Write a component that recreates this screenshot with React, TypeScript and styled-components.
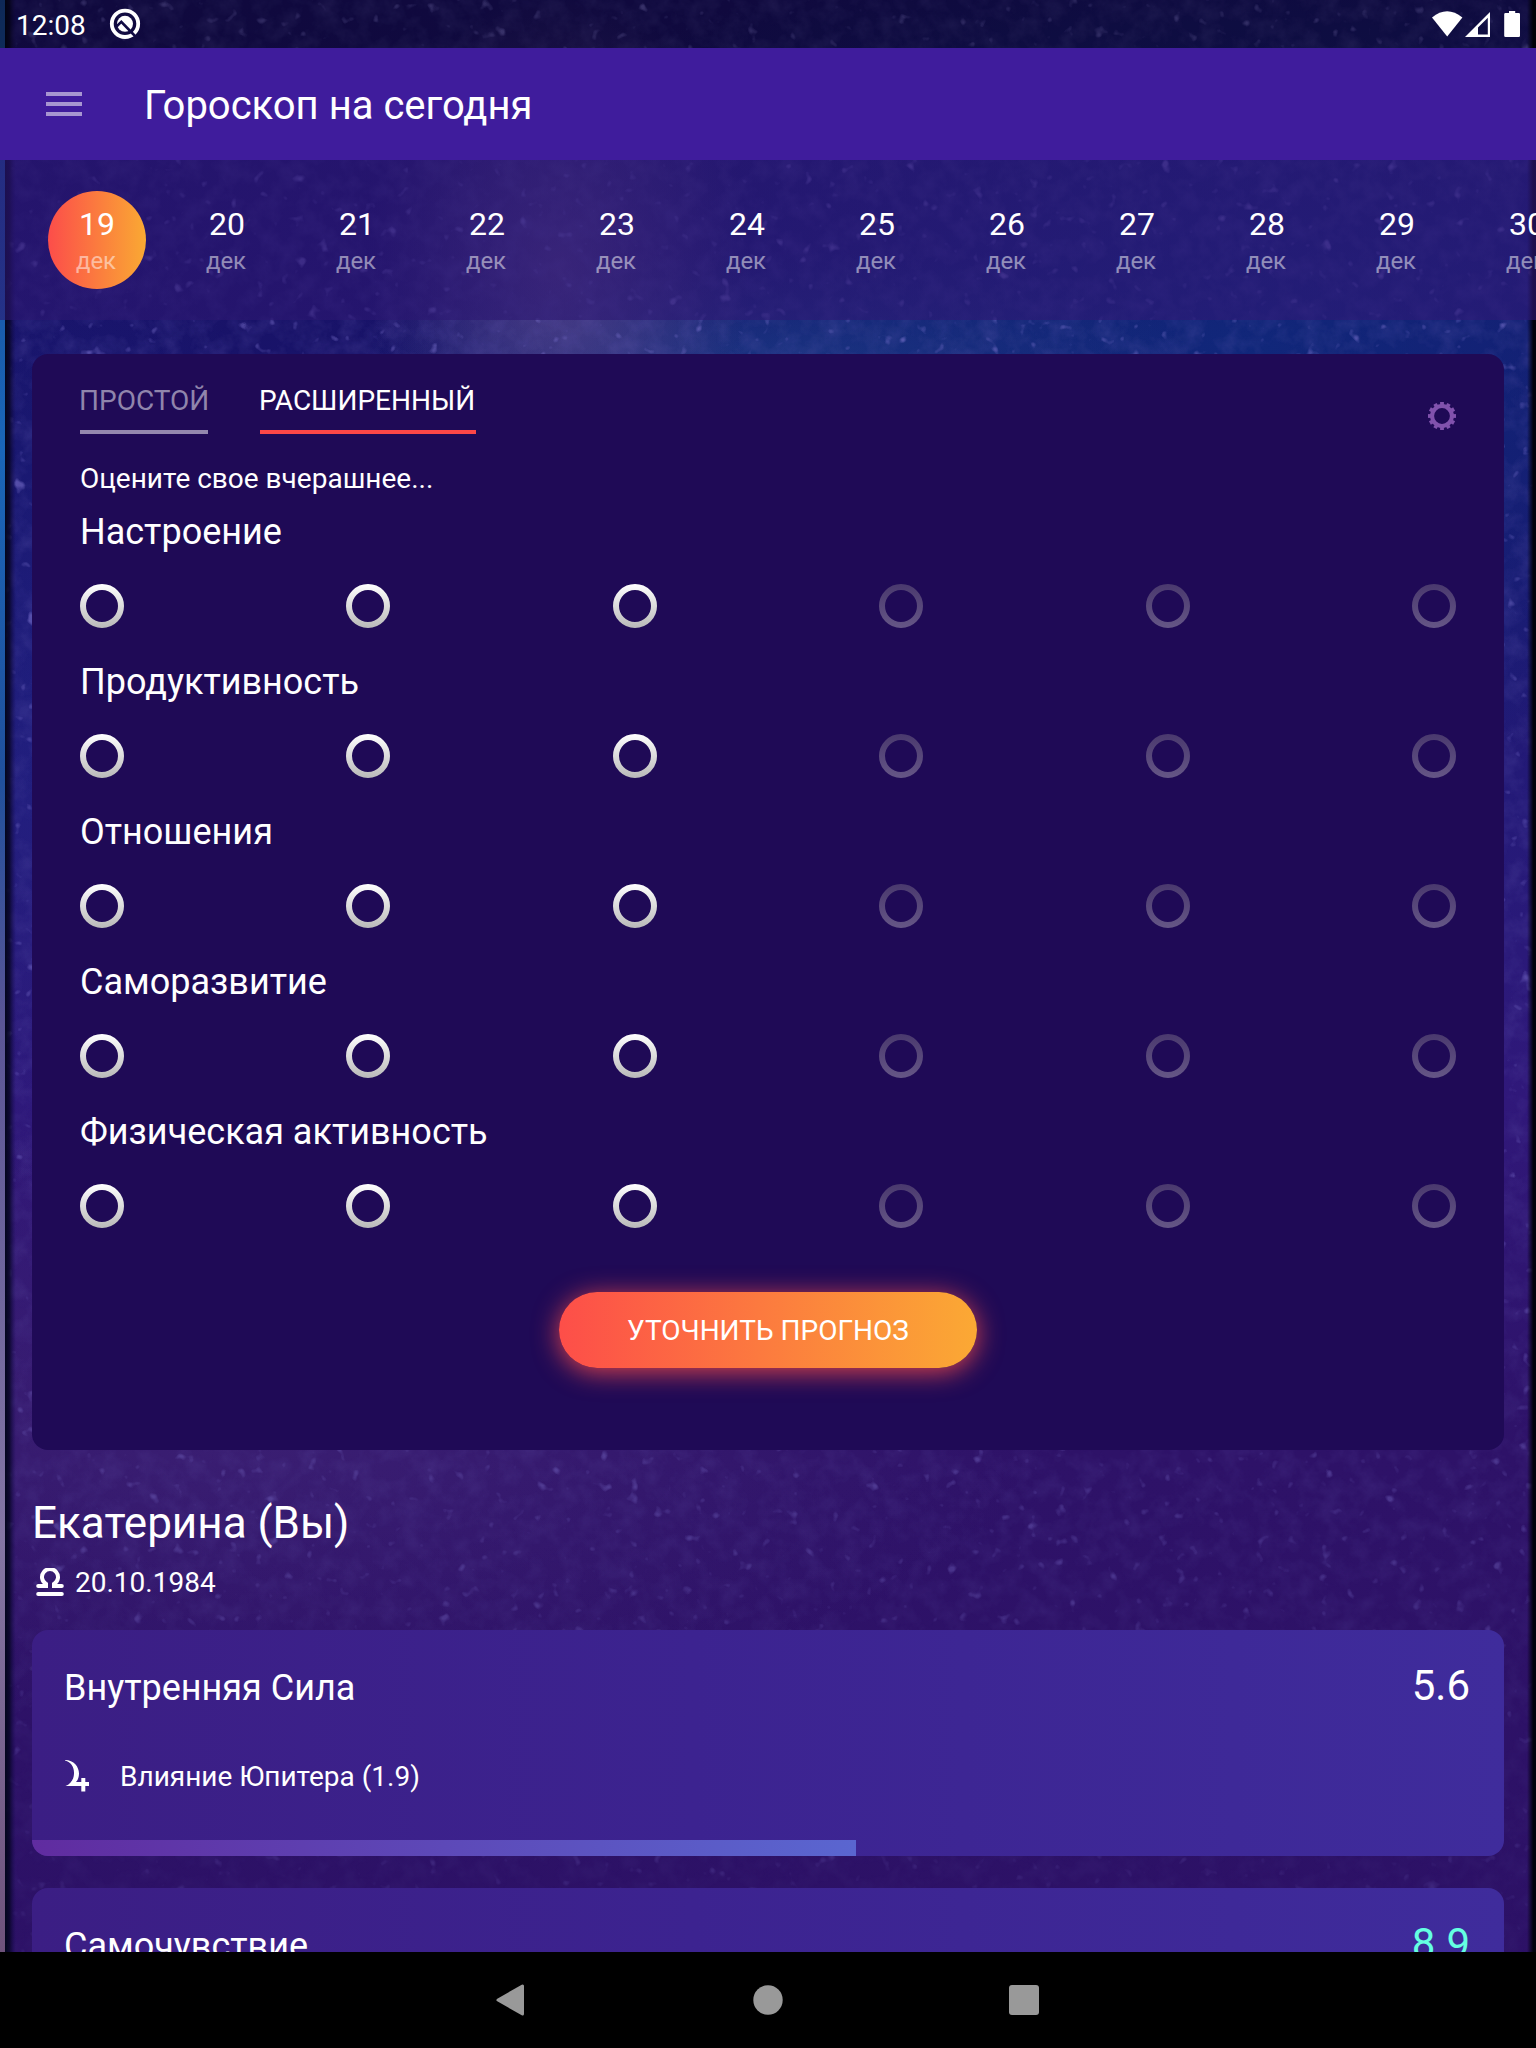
import React from "react";
import styled, { createGlobalStyle } from "styled-components";

const GlobalStyle = createGlobalStyle`
  * { box-sizing: border-box; }
  body { margin: 0; background: #000; }
`;

const Screen = styled.div`
  position: relative;
  display: flex;
  flex-direction: column;
  width: 1536px;
  height: 2048px;
  overflow: hidden;
  color: #fff;
  font-family: Roboto, "Noto Sans", sans-serif;
  isolation: isolate;
  background:
    radial-gradient(ellipse 190px 280px at 560px 270px, rgba(116, 86, 152, 0.55), rgba(100, 70, 150, 0) 100%),
    radial-gradient(ellipse 420px 120px at 780px 370px, rgba(30, 68, 140, 0.6), rgba(20, 60, 140, 0) 100%),
    radial-gradient(ellipse 900px 420px at 1250px 350px, rgba(14, 46, 128, 0.75), rgba(12, 50, 140, 0) 100%),
    radial-gradient(ellipse 240px 500px at 60px 700px, rgba(30, 40, 140, 0.4), rgba(30, 40, 140, 0) 100%),
    radial-gradient(ellipse 800px 300px at 250px 1420px, rgba(72, 44, 126, 0.5), rgba(70, 40, 125, 0) 100%),
    linear-gradient(180deg, #1a1065 0, #18146a 450px, #241a78 800px, #30187a 1100px, #2e1268 1450px, #2c1166 2048px);
`;

const Backdrop = styled.svg`
  position: absolute;
  inset: 0;
  z-index: -1;
`;

const StatusBar = styled.div`
  display: flex;
  justify-content: space-between;
  flex: none;
  height: 48px;
  padding: 0 14px 0 16px;
  background: rgba(0, 0, 0, 0.38);
`;

const StatusGroup = styled.div`
  display: flex;
`;

const Clock = styled.span`
  width: 93px;
  padding-top: 3px;
  font-size: 28px;
  line-height: 46px;
`;

const AppBar = styled.header`
  display: flex;
  align-items: center;
  flex: none;
  height: 112px;
  padding-left: 46px;
  background: #3f1c9c;
`;

const MenuIcon = styled.div`
  display: flex;
  flex-direction: column;
  gap: 6px;
  width: 36px;
  margin-right: 62px;
`;

const MenuBar = styled.span`
  height: 4px;
  background: rgba(255, 255, 255, 0.54);
`;

const Title = styled.h1`
  margin: 0;
  padding-top: 3px;
  font-size: 40px;
  line-height: 48px;
  font-weight: 400;
  white-space: nowrap;
`;

const DateStrip = styled.nav`
  display: flex;
  gap: 32px;
  flex: none;
  height: 160px;
  padding: 31px 0 0 48px;
  overflow: hidden;
  background: linear-gradient(90deg, rgba(44, 22, 112, 0.6), rgba(46, 24, 118, 0.62));
`;

const Day = styled.div<{ $active?: boolean }>`
  flex: none;
  width: 98px;
  height: 98px;
  padding-top: 14px;
  border-radius: 50%;
  text-align: center;
  background: ${(p) => (p.$active ? "linear-gradient(90deg, #fc4d4a, #faa933)" : "none")};
`;

const DayNumber = styled.div`
  font-size: 32px;
  line-height: 38px;
`;

const Month = styled.div`
  margin: 2px 2px 0 0;
  font-size: 24px;
  line-height: 32px;
  color: rgba(255, 255, 255, 0.5);
`;

const Content = styled.main`
  flex: 1;
  min-height: 0;
  padding: 34px 32px 0;
  overflow: hidden;
`;

const Panel = styled.section`
  display: flex;
  flex-direction: column;
  height: 1096px;
  padding: 30px 48px 0;
  border-radius: 16px;
  background: #1f0a56;
`;

const PanelHead = styled.div`
  display: flex;
  justify-content: space-between;
  height: 50px;
`;

const Tabs = styled.div`
  display: flex;
  gap: 52px;
`;

const Tab = styled.div<{ $active?: boolean; $w: number }>`
  width: ${(p) => p.$w}px;
  height: 50px;
  padding-top: 1px;
  border-bottom: 4px solid ${(p) => (p.$active ? "#fd4747" : "#9488ae")};
  color: ${(p) => (p.$active ? "#fff" : "#9085ac")};
  font-size: 28px;
  line-height: 32px;
  text-indent: -1px;
  white-space: nowrap;
`;

const Gear = styled.svg`
  margin-top: 18px;
`;

const Prompt = styled.p`
  margin: 29px 0 16px;
  font-size: 28px;
  line-height: 32px;
`;

const Question = styled.div`
  display: flex;
  flex-direction: column;
  gap: 31px;
  height: 150px;
`;

const QuestionName = styled.div`
  font-size: 36px;
  line-height: 42px;
`;

const Scale = styled.div`
  display: flex;
  justify-content: space-between;
`;

const Action = styled.button`
  align-self: center;
  width: 418px;
  height: 76px;
  margin-top: 31px;
  padding: 1px 0 0;
  border: 0;
  border-radius: 38px;
  color: #fff;
  font: 400 28px/75px Roboto, "Noto Sans", sans-serif;
  background: linear-gradient(90deg, #fd4e49, #fba934);
  box-shadow: 0 4px 26px rgba(253, 78, 73, 0.85);
`;

const Person = styled.h2`
  margin: 47px 0 17px;
  font-size: 44px;
  line-height: 52px;
  font-weight: 400;
`;

const BirthRow = styled.div`
  display: flex;
  align-items: center;
  gap: 11px;
  height: 32px;
  margin: 0 0 32px 4px;
  font-size: 28px;
  line-height: 32px;
`;

const BirthDate = styled.span`
  padding-top: 2px;
`;

const Card = styled.article`
  display: flex;
  flex-direction: column;
  height: 226px;
  margin-bottom: 32px;
  border-radius: 16px;
  overflow: hidden;
  background: linear-gradient(90deg, #3b1e84, #3c2390 45%, #3f2c9c);
`;

const CardHead = styled.div`
  display: flex;
  justify-content: space-between;
  padding: 37px 34px 0 32px;
  font-size: 36px;
  line-height: 42px;
`;

const Score = styled.span<{ $good?: boolean }>`
  margin-top: -2px;
  font-size: 42px;
  color: ${(p) => (p.$good ? "#64ffe2" : "#fff")};
`;

const Influence = styled.div`
  display: flex;
  gap: 31px;
  height: 32px;
  margin: 51px 0 0 33px;
  font-size: 28px;
  line-height: 34px;
`;

const Progress = styled.div<{ $share: number }>`
  width: ${(p) => p.$share}%;
  height: 16px;
  margin-top: auto;
  background: linear-gradient(90deg, #602ca0, #5a66d0);
`;

const NavBar = styled.footer`
  display: flex;
  align-items: center;
  justify-content: center;
  flex: none;
  height: 96px;
  background: #000;
`;

const NavKey = styled.div`
  display: flex;
  justify-content: center;
  width: 256px;
`;

const days = ["19", "20", "21", "22", "23", "24", "25", "26", "27", "28", "29", "30"];
const questions = ["Настроение", "Продуктивность", "Отношения", "Саморазвитие", "Физическая активность"];

function Sky() {
  return (
    <Backdrop width="1536" height="2048">
      <defs>
        <filter id="grain" x="0" y="0" width="100%" height="100%" colorInterpolationFilters="sRGB">
          <feTurbulence type="fractalNoise" baseFrequency="0.05" numOctaves="5" seed="7" />
          <feColorMatrix values="0 0 0 0 .42  0 0 0 0 .38  0 0 0 0 .72  1.6 0 0 0 -.6" />
        </filter>
        <filter id="stars" x="0" y="0" width="100%" height="100%" colorInterpolationFilters="sRGB">
          <feTurbulence type="fractalNoise" baseFrequency="0.075" numOctaves="2" seed="21" />
          <feColorMatrix values="0 0 0 0 .5  0 0 0 0 .46  0 0 0 0 .82  6 0 0 0 -4.1" />
        </filter>
        <linearGradient id="fade" x2="0" y2="1">
          <stop offset="0" stopColor="#fff" />
          <stop offset=".6" stopColor="#fff" stopOpacity=".8" />
          <stop offset="1" stopColor="#fff" stopOpacity=".2" />
        </linearGradient>
        <mask id="fadeMask">
          <rect width="1536" height="2048" fill="url(#fade)" />
        </mask>
        <linearGradient id="edge" x2="0" y2="1">
          <stop offset="0" stopColor="#17428c" />
          <stop offset=".22" stopColor="#1a66b8" />
          <stop offset=".38" stopColor="#20509c" />
          <stop offset=".5" stopColor="#5a5596" />
          <stop offset=".75" stopColor="#8476a4" />
          <stop offset="1" stopColor="#6a4a72" />
        </linearGradient>
        <linearGradient id="seam">
          <stop offset="0" stopColor="#02051c" />
          <stop offset=".4" stopColor="#050420" stopOpacity=".8" />
          <stop offset="1" stopColor="#12084c" stopOpacity="0" />
        </linearGradient>
        <linearGradient id="rightSeam">
          <stop offset="0" stopColor="#02020e" stopOpacity="0" />
          <stop offset=".7" stopColor="#02020e" />
        </linearGradient>
      </defs>
      <g mask="url(#fadeMask)">
        <rect width="1536" height="2048" filter="url(#grain)" opacity=".3" />
        <rect width="1536" height="2048" filter="url(#stars)" opacity=".6" />
      </g>
      <rect width="5" height="2048" fill="url(#edge)" />
      <rect x="5" width="11" height="2048" fill="url(#seam)" />
      <rect x="1527" width="9" height="2048" fill="url(#rightSeam)" />
    </Backdrop>
  );
}

function Radio({ dim }: { dim?: boolean }) {
  return (
    <svg width="44" height="44">
      <circle cx="22" cy="22" r="19" fill="none" strokeWidth="6" stroke={dim ? "url(#dimRing)" : "url(#ring)"} />
    </svg>
  );
}

function RingPaint() {
  return (
    <svg width="0" height="0" style={{ position: "absolute" }}>
      <defs>
        <linearGradient id="ring" gradientUnits="userSpaceOnUse" x1="0" y1="0" x2="0" y2="44">
          <stop offset="0" stopColor="#fff" />
          <stop offset="1" stopColor="#b9b9b9" />
        </linearGradient>
        <linearGradient id="dimRing" gradientUnits="userSpaceOnUse" x1="0" y1="0" x2="0" y2="44">
          <stop offset="0" stopColor="#4a396e" />
          <stop offset="1" stopColor="#655686" />
        </linearGradient>
      </defs>
    </svg>
  );
}

export default function App() {
  return (
    <>
      <GlobalStyle />
      <RingPaint />
      <Screen>
        <Sky />
        <StatusBar>
          <StatusGroup>
            <Clock>12:08</Clock>
            <svg width="32" height="48" viewBox="109 0 32 48">
              <circle cx="125" cy="23.8" r="13.2" fill="none" stroke="#fff" strokeWidth="3.8" />
              <circle cx="125" cy="23.8" r="8" fill="#fff" />
              <path d="M115.5 27.5L121.3 21.8L135 36" fill="none" stroke="#100a44" strokeWidth="2.6" />
            </svg>
          </StatusGroup>
          <svg width="90" height="48" viewBox="1432 0 90 48">
            <path d="M1432 17.5Q1447 5 1462.4 17.5L1447.2 36.4Z" fill="#fff" />
            <path d="M1490 12V37H1465ZM1487.8 17.8L1478 27.6V34.6H1487.8Z" fill="#fff" fillRule="evenodd" />
            <path d="M1509 11h6.200v2h3.500q1.300 0 1.300 1.300v21.400q0 1.300-1.300 1.300h-13.200q-1.300 0-1.300-1.300v-21.400q0-1.300 1.300-1.300h3.500z" fill="#fff" />
          </svg>
        </StatusBar>
        <AppBar>
          <MenuIcon>
            <MenuBar />
            <MenuBar />
            <MenuBar />
          </MenuIcon>
          <Title>Гороскоп на сегодня</Title>
        </AppBar>
        <DateStrip>
          {days.map((d, i) => (
            <Day key={d} $active={i === 0}>
              <DayNumber>{d}</DayNumber>
              <Month>дек</Month>
            </Day>
          ))}
        </DateStrip>
        <Content>
          <Panel>
            <PanelHead>
              <Tabs>
                <Tab $w={128}>ПРОСТОЙ</Tab>
                <Tab $w={216} $active>РАСШИРЕННЫЙ</Tab>
              </Tabs>
              <Gear width="28" height="28" viewBox="-14 -14 28 28">
                <circle r="9.9" fill="none" stroke="#8152ad" strokeWidth="4" />
                {Array.from({ length: 12 }, (_, i) => (
                  <rect key={i} x="-1.9" y="-14" width="3.8" height="4" fill="#8152ad" transform={`rotate(${i * 30})`} />
                ))}
              </Gear>
            </PanelHead>
            <Prompt>Оцените свое вчерашнее...</Prompt>
            {questions.map((q) => (
              <Question key={q}>
                <QuestionName>{q}</QuestionName>
                <Scale>
                  {[0, 1, 2, 3, 4, 5].map((n) => (
                    <Radio key={n} dim={n > 2} />
                  ))}
                </Scale>
              </Question>
            ))}
            <Action>УТОЧНИТЬ ПРОГНОЗ</Action>
          </Panel>
          <Person>Екатерина (Вы)</Person>
          <BirthRow>
            <svg width="28" height="28" viewBox="0 0 28 28" fill="none" stroke="#fff" strokeWidth="4" strokeLinecap="round">
              <path d="M2.200 18H10V16A8 8 0 1 1 18 16V18H25.800M2.200 26H25.800" />
            </svg>
            <BirthDate>20.10.1984</BirthDate>
          </BirthRow>
          <Card>
            <CardHead>
              <span>Внутренняя Сила</span>
              <Score>5.6</Score>
            </CardHead>
            <Influence>
              <svg width="24" height="32" viewBox="0 0 24 32">
                <path fill="#fff" d="M0 0C9 0 14 7 14 13.500C14 17 13 20 11 22H16.300V18H20.300V22H24V26H20.300V31.600H16.300V26H.5C6 24 9 19 9 13C9 7 6 2 0 .5Z" />
              </svg>
              <span>Влияние Юпитера (1.9)</span>
            </Influence>
            <Progress $share={56} />
          </Card>
          <Card>
            <CardHead>
              <span>Самочувствие</span>
              <Score $good>8.9</Score>
            </CardHead>
          </Card>
        </Content>
        <NavBar>
          <NavKey>
            <svg width="32" height="32" viewBox="0 0 32 32">
              <path d="M26.500 2V30L2 16Z" fill="#999" stroke="#999" strokeWidth="3" strokeLinejoin="round" />
            </svg>
          </NavKey>
          <NavKey>
            <svg width="32" height="32">
              <circle cx="16" cy="16" r="14.700" fill="#999" />
            </svg>
          </NavKey>
          <NavKey>
            <svg width="30" height="30">
              <rect width="30" height="30" rx="3" fill="#999" />
            </svg>
          </NavKey>
        </NavBar>
      </Screen>
    </>
  );
}
